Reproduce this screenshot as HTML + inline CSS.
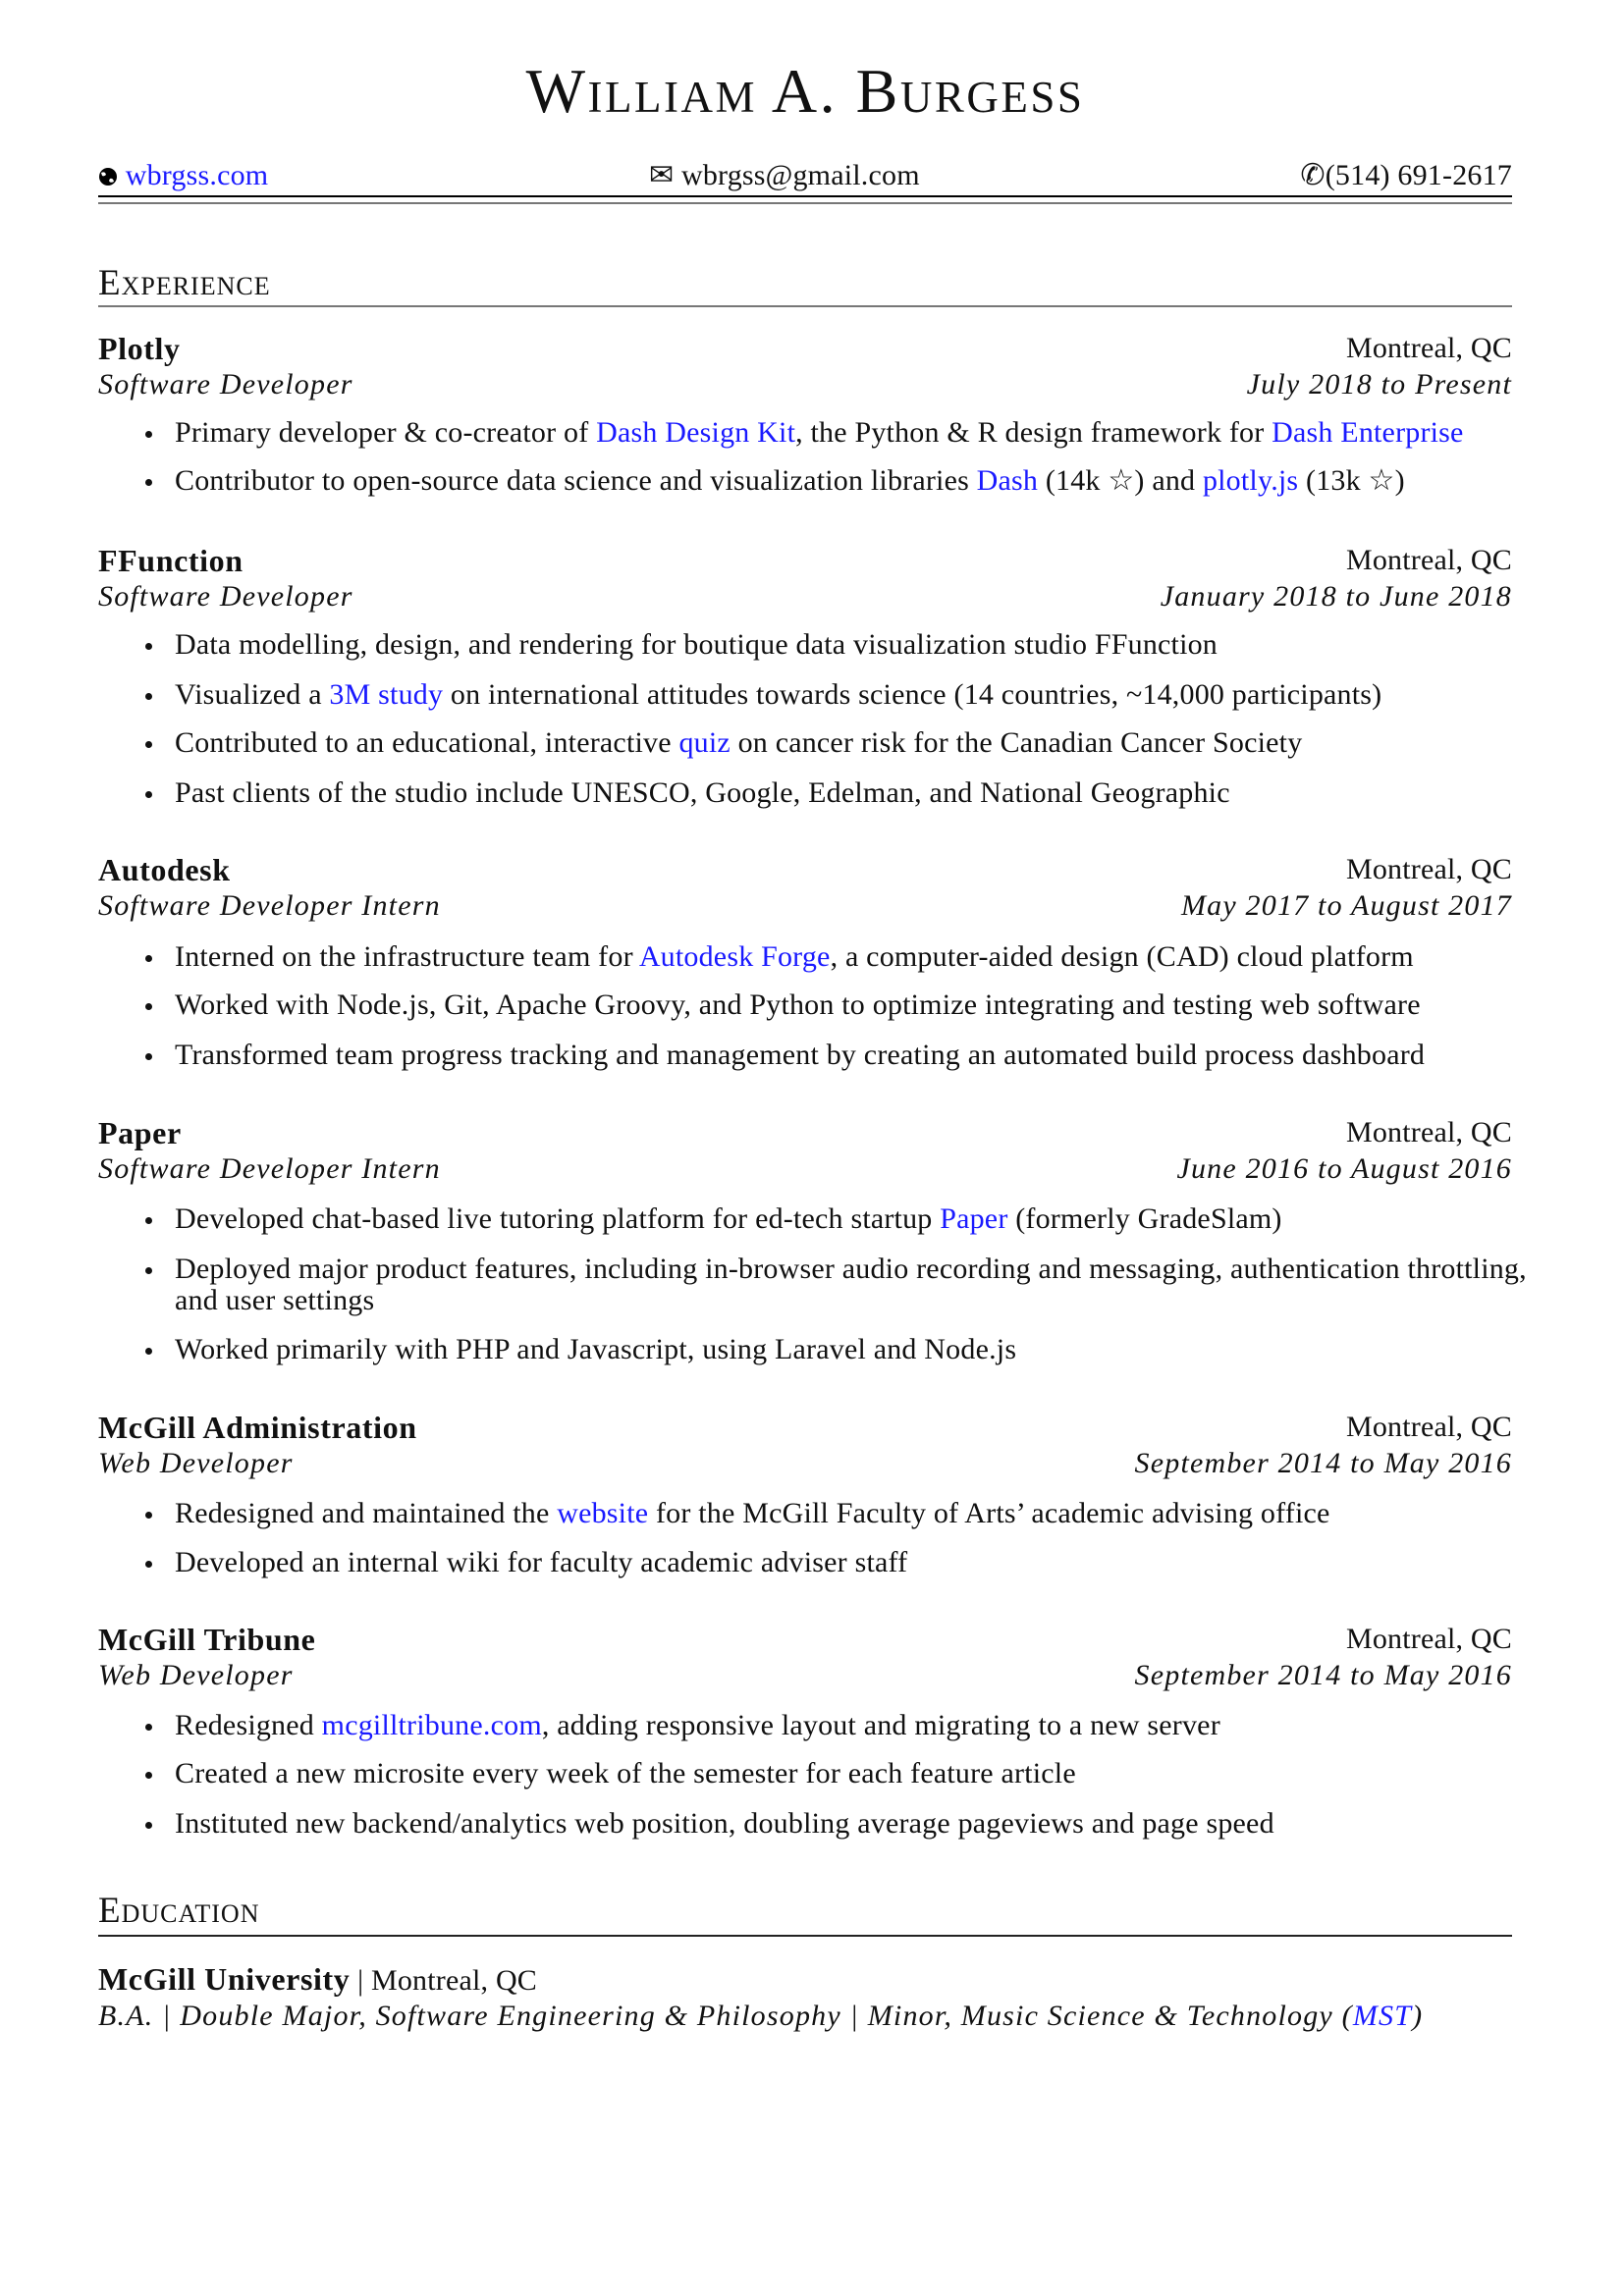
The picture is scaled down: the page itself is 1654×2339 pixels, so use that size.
<!DOCTYPE html>
<html><head><meta charset="utf-8">
<style>
body{margin:0;background:#fff;}
#p{position:relative;width:1654px;height:2339px;font-family:"Liberation Serif",serif;font-size:30px;color:#111;}
.l{position:absolute;left:100px;width:1440px;line-height:34px;height:34px;white-space:nowrap;display:flex;justify-content:space-between;letter-spacing:0.2px;}
.b{left:178px;width:1362px;}
.b::before{content:"";position:absolute;left:-30px;top:15px;width:7px;height:7px;border-radius:50%;background:#111;}
a{color:#1a1aff;text-decoration:none;}
i{font-style:italic;letter-spacing:1.2px;}
.co{font-weight:bold;font-size:32px;letter-spacing:0.6px;}
.sc{font-variant:small-caps;}
.rule{position:absolute;left:100px;width:1440px;}
</style></head><body><div id="p">
<div class="l sc" style="top:56px;height:74px;line-height:74px;justify-content:center;font-size:64px;letter-spacing:2.5px;">William A. Burgess</div>
<div class="l" style="top:162px;"><span><svg width="20" height="20" viewBox="0 0 20 20" style="vertical-align:-2px"><circle cx="10" cy="10" r="9" fill="#000"/><path d="M3 6 Q7 4 8 8 Q6 10 4 9Z M12 12 Q15 11 16 15 Q12 17 11 14Z" fill="#fff"/></svg> <a>wbrgss.com</a></span><span>✉ wbrgss@gmail.com</span><span>✆(514) 691-2617</span></div>
<div class="rule" style="top:199px;border-top:2px solid #000;"></div>
<div class="rule" style="top:206px;border-top:2px solid #777;"></div>
<div class="l sc" style="top:272px;font-size:37px;letter-spacing:1px;">Experience</div>
<div class="rule" style="top:311px;border-top:2px solid #777;"></div>

<div class="l" style="top:338px;"><span class="co">Plotly</span><span>Montreal, QC</span></div>
<div class="l" style="top:375px;"><i>Software Developer</i><i>July 2018 to Present</i></div>
<div class="l b" style="top:424px;"><span>Primary developer &amp; co-creator of <a>Dash Design Kit</a>, the Python &amp; R design framework for <a>Dash Enterprise</a></span></div>
<div class="l b" style="top:473px;"><span>Contributor to open-source data science and visualization libraries <a>Dash</a> (14k ☆) and <a>plotly.js</a> (13k ☆)</span></div>

<div class="l" style="top:554px;"><span class="co">FFunction</span><span>Montreal, QC</span></div>
<div class="l" style="top:591px;"><i>Software Developer</i><i>January 2018 to June 2018</i></div>
<div class="l b" style="top:640px;"><span>Data modelling, design, and rendering for boutique data visualization studio FFunction</span></div>
<div class="l b" style="top:691px;"><span>Visualized a <a>3M study</a> on international attitudes towards science (14 countries, ~14,000 participants)</span></div>
<div class="l b" style="top:740px;"><span>Contributed to an educational, interactive <a>quiz</a> on cancer risk for the Canadian Cancer Society</span></div>
<div class="l b" style="top:791px;"><span>Past clients of the studio include UNESCO, Google, Edelman, and National Geographic</span></div>

<div class="l" style="top:869px;"><span class="co">Autodesk</span><span>Montreal, QC</span></div>
<div class="l" style="top:906px;"><i>Software Developer Intern</i><i>May 2017 to August 2017</i></div>
<div class="l b" style="top:958px;"><span>Interned on the infrastructure team for <a>Autodesk Forge</a>, a computer-aided design (CAD) cloud platform</span></div>
<div class="l b" style="top:1007px;"><span>Worked with Node.js, Git, Apache Groovy, and Python to optimize integrating and testing web software</span></div>
<div class="l b" style="top:1058px;"><span>Transformed team progress tracking and management by creating an automated build process dashboard</span></div>

<div class="l" style="top:1137px;"><span class="co">Paper</span><span>Montreal, QC</span></div>
<div class="l" style="top:1174px;"><i>Software Developer Intern</i><i>June 2016 to August 2016</i></div>
<div class="l b" style="top:1225px;"><span>Developed chat-based live tutoring platform for ed-tech startup <a>Paper</a> (formerly GradeSlam)</span></div>
<div class="l b" style="top:1276px;"><span>Deployed major product features, including in-browser audio recording and messaging, authentication throttling,</span></div>
<div class="l" style="top:1308px;left:178px;width:1362px;"><span>and user settings</span></div>
<div class="l b" style="top:1358px;"><span>Worked primarily with PHP and Javascript, using Laravel and Node.js</span></div>

<div class="l" style="top:1437px;"><span class="co">McGill Administration</span><span>Montreal, QC</span></div>
<div class="l" style="top:1474px;"><i>Web Developer</i><i>September 2014 to May 2016</i></div>
<div class="l b" style="top:1525px;"><span>Redesigned and maintained the <a>website</a> for the McGill Faculty of Arts’ academic advising office</span></div>
<div class="l b" style="top:1575px;"><span>Developed an internal wiki for faculty academic adviser staff</span></div>

<div class="l" style="top:1653px;"><span class="co">McGill Tribune</span><span>Montreal, QC</span></div>
<div class="l" style="top:1690px;"><i>Web Developer</i><i>September 2014 to May 2016</i></div>
<div class="l b" style="top:1741px;"><span>Redesigned <a>mcgilltribune.com</a>, adding responsive layout and migrating to a new server</span></div>
<div class="l b" style="top:1790px;"><span>Created a new microsite every week of the semester for each feature article</span></div>
<div class="l b" style="top:1841px;"><span>Instituted new backend/analytics web position, doubling average pageviews and page speed</span></div>

<div class="l sc" style="top:1930px;font-size:37px;letter-spacing:1px;">Education</div>
<div class="rule" style="top:1971px;border-top:2px solid #222;"></div>
<div class="l" style="top:1999px;"><span><span class="co">McGill University</span> | Montreal, QC</span></div>
<div class="l" style="top:2037px;"><i>B.A. | Double Major, Software Engineering &amp; Philosophy | Minor, Music Science &amp; Technology (<a>MST</a>)</i></div>
</div></body></html>
